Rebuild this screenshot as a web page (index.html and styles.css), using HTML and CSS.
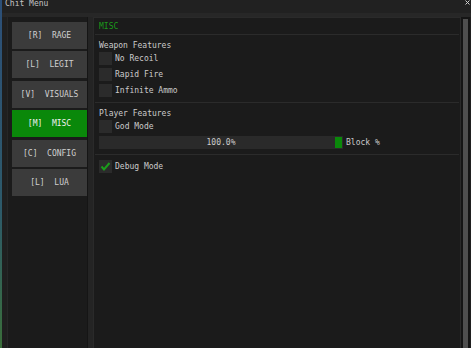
FILE: index.html
```html
<!DOCTYPE html>
<html>
<head>
  <meta charset="UTF-8">
  <title>Chit Menu</title>
  <link rel="stylesheet" href="styles.css">
</head>
<body>
  <div class="screen">
    <div class="edge"></div>
    <div class="window">
      <div class="titlebar">
        <span class="title">Chit Menu</span>
        <svg class="close" width="5" height="5" viewBox="0 0 5 5">
          <path d="M0.5 0.5 L4.5 4.5 M4.5 0.5 L0.5 4.5" stroke="#cfcfcf" stroke-width="1"/>
        </svg>
      </div>
      <div class="main">
        <div class="sidebar">
          <div class="tab">[R]  RAGE</div>
          <div class="tab">[L]  LEGIT</div>
          <div class="tab">[V]  VISUALS</div>
          <div class="tab active">[M]  MISC</div>
          <div class="tab">[C]  CONFIG</div>
          <div class="tab">[L]  LUA</div>
        </div>
        <div class="gutter"></div>
        <div class="panel">
          <div class="tab-title">MISC</div>
          <div class="sep"></div>

          <div class="group-label">Weapon Features</div>
          <div class="group">
            <div class="check-row"><span class="box"></span><span class="label">No Recoil</span></div>
            <div class="check-row"><span class="box"></span><span class="label">Rapid Fire</span></div>
            <div class="check-row"><span class="box"></span><span class="label">Infinite Ammo</span></div>
          </div>
          <div class="sep gap"></div>

          <div class="group-label">Player Features</div>
          <div class="group">
            <div class="check-row"><span class="box"></span><span class="label">God Mode</span></div>
            <div class="slider-row">
              <div class="slider">
                <span class="slider-value">100.0%</span>
                <span class="grab"></span>
              </div>
              <span class="label">Block %</span>
            </div>
          </div>
          <div class="sep gap"></div>

          <div class="group debug">
            <div class="check-row">
              <span class="box">
                <svg width="13" height="13" viewBox="0 0 13 13">
                  <polyline points="2.5,6.5 5,9.5 10.5,3" fill="none" stroke="#1c9c1c" stroke-width="2"/>
                </svg>
              </span>
              <span class="label">Debug Mode</span>
            </div>
          </div>
        </div>
        <div class="scroll"><div class="thumb"></div></div>
      </div>
    </div>
  </div>
</body>
</html>
```

FILE: styles.css
```css
html, body {
  margin: 0;
  height: 100%;
}
body {
  background-color: #1f1f1f;
  font-family: "DejaVu Sans Mono", "Liberation Mono", monospace;
  font-size: 8px;
  color: #cbcbcb;
  overflow: hidden;
}
.screen {
  display: flex;
  height: 348px;
  width: 471px;
}
.edge {
  width: 2px;
  background: linear-gradient(#2c4f78, #2d5a6a 60%, #3a6e3a);
}
.window {
  flex: 1;
  display: flex;
  flex-direction: column;
  background-color: #1f1f1f;
}
.titlebar {
  height: 13px;
  background-color: #212121;
  display: flex;
  justify-content: space-between;
  align-items: flex-start;
  padding: 0 1px 0 3px;
  box-sizing: border-box;
}
.title {
  line-height: 8px;
  white-space: pre;
  color: #c4c4c4;
}
.close {
  display: block;
}
.main {
  flex: 1;
  display: flex;
  border-top: 4px solid #272727;
  padding-left: 5px;
  min-height: 0;
}
.sidebar {
  width: 81px;
  box-sizing: border-box;
  background-color: #1b1b1b;
  border-left: 1px solid #262626;
  border-right: 1px solid #151515;
  padding: 5px 0 0 4px;
}
.tab {
  width: 75px;
  height: 27px;
  line-height: 27px;
  margin-bottom: 2.4px;
  background-color: #3b3b3b;
  text-align: center;
  white-space: pre;
  color: #cfcfcf;
}
.tab.active {
  background-color: #0a880a;
  color: #f0f0f0;
}
.gutter {
  width: 5px;
  background-color: #242424;
}
.panel {
  width: 368px;
  box-sizing: border-box;
  background-color: #1b1b1b;
  border: 1px solid #2a2a2a;
  border-bottom: none;
  padding: 0 5px;
}
.tab-title {
  padding-top: 2px;
  line-height: 14px;
  color: #1a9a1a;
}
.sep {
  height: 1px;
  background-color: #2b2b2b;
  margin: 0 -4px;
}
.sep.gap {
  margin-top: 5px;
}
.group-label {
  padding-top: 4px;
  line-height: 13px;
}
.group {
  display: flex;
  flex-direction: column;
  gap: 3px;
}
.group.debug {
  margin-top: 5px;
}
.check-row {
  display: flex;
  align-items: center;
  height: 13px;
  gap: 3px;
}
.box {
  width: 13px;
  height: 13px;
  background-color: #2b2b2b;
  display: block;
}
.box svg {
  display: block;
}
.label {
  line-height: 13px;
  white-space: pre;
}
.slider-row {
  display: flex;
  align-items: center;
  height: 13px;
  gap: 3px;
}
.slider {
  position: relative;
  width: 244px;
  height: 13px;
  background-color: #2a2a2a;
  text-align: center;
  line-height: 13px;
}
.grab {
  position: absolute;
  right: 1px;
  top: 1px;
  width: 7px;
  height: 11px;
  background-color: #0a880a;
}
.scroll {
  width: 9px;
  box-sizing: border-box;
  background-color: #151515;
  padding: 2px 2px 0 2px;
}
.thumb {
  height: 100%;
  background-color: #4f4f4f;
}
```
